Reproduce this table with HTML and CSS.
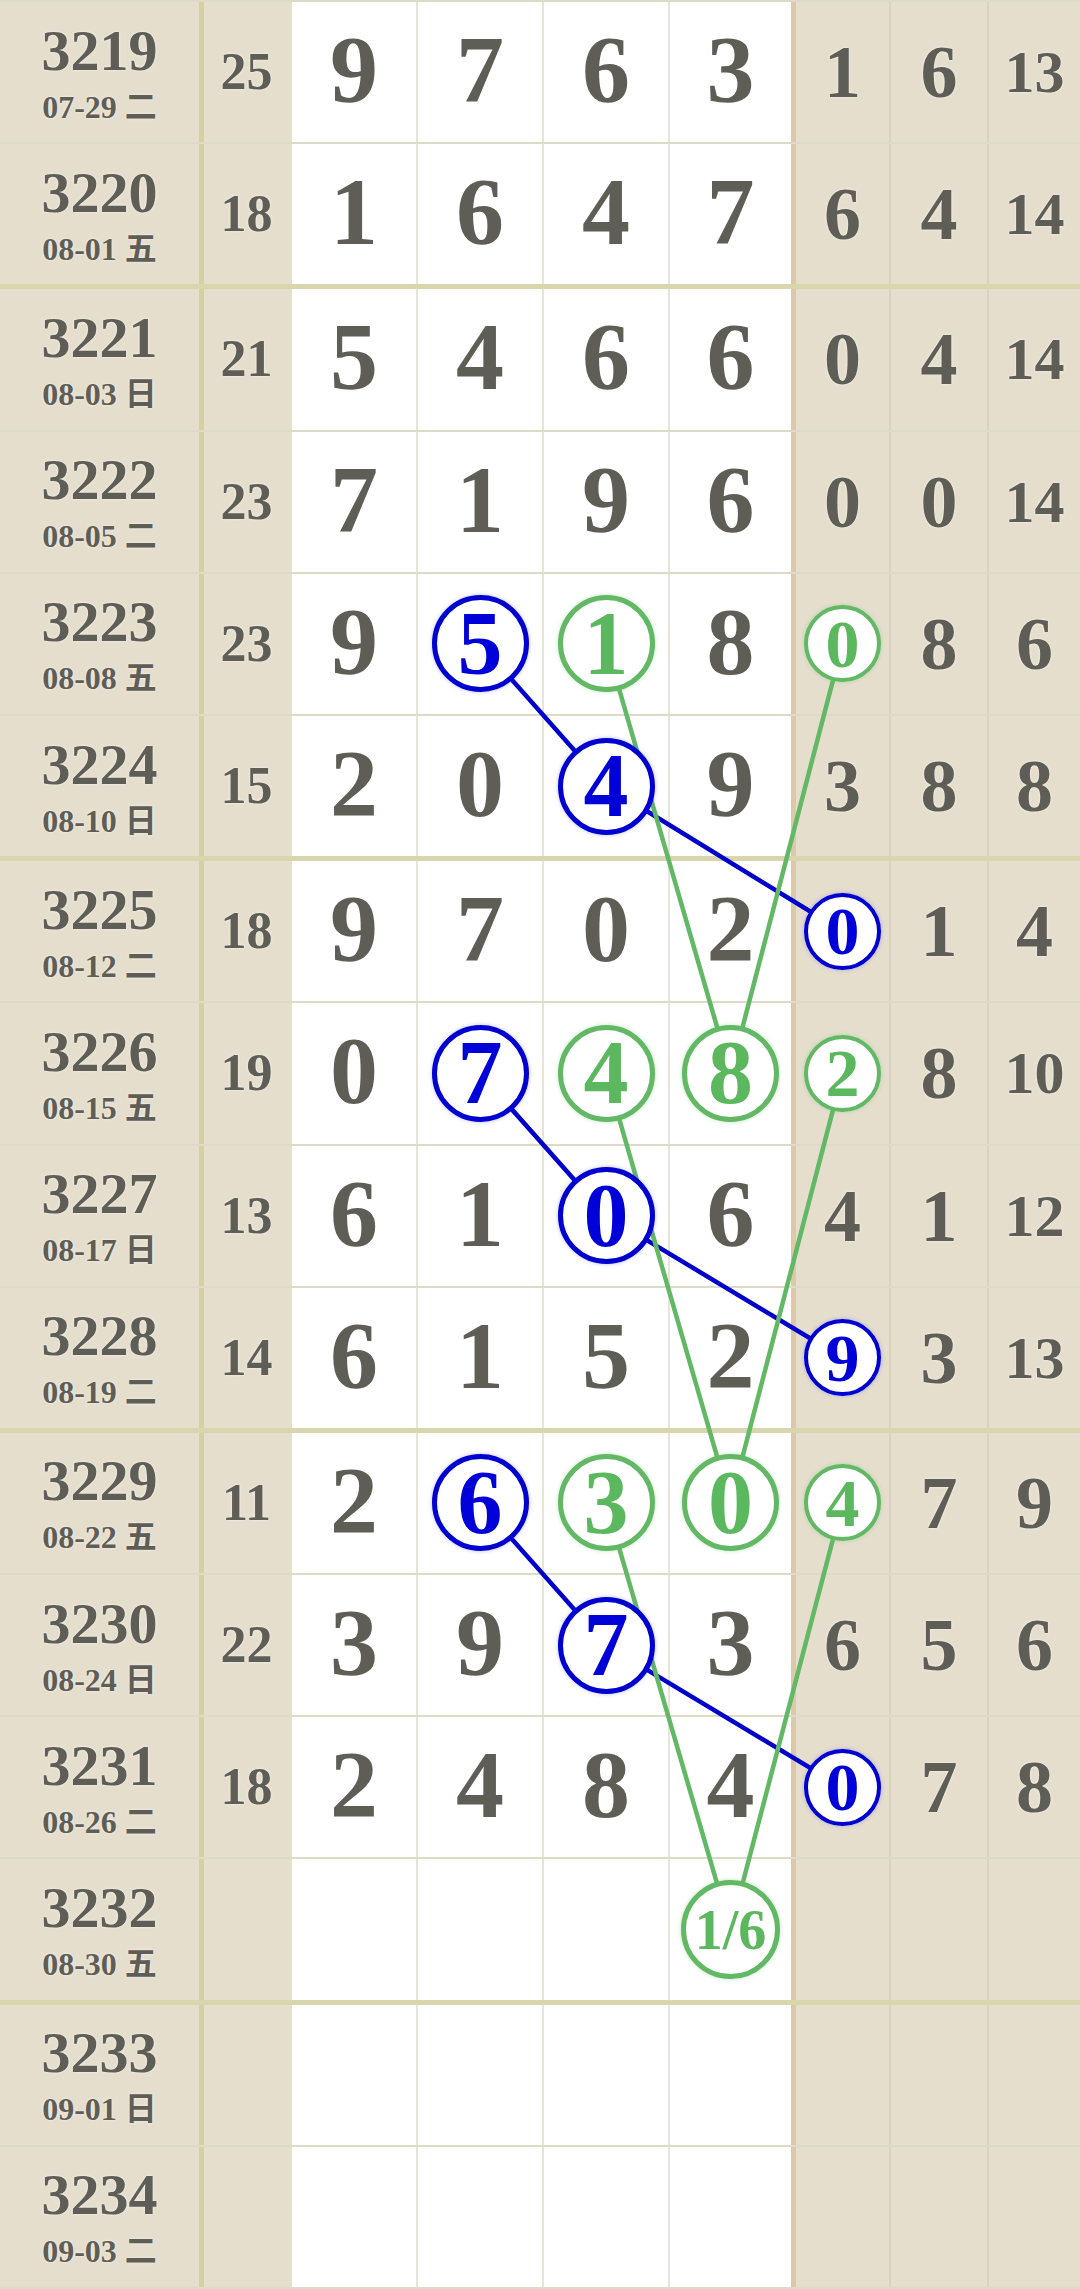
FILE: index.html
```html
<!DOCTYPE html>
<html lang="zh">
<head>
  <meta charset="UTF-8" />
  <meta name="viewport" content="width=device-width, initial-scale=1.0" />
  <title>走势图</title>
  <link rel="stylesheet" href="styles.css">
</head>
<body>
  <div class="board" id="board">
    <svg class="links" id="links" width="1080" height="2289" xmlns="http://www.w3.org/2000/svg"></svg>
  </div>
  <script>
    // b = blue ball, g = green ball
    const rows = [
      ['3219', '07-29', '二', '25', ['9', '7', '6', '3'], ['1', '6', '13']],
      ['3220', '08-01', '五', '18', ['1', '6', '4', '7'], ['6', '4', '14']],
      ['3221', '08-03', '日', '21', ['5', '4', '6', '6'], ['0', '4', '14']],
      ['3222', '08-05', '二', '23', ['7', '1', '9', '6'], ['0', '0', '14']],
      ['3223', '08-08', '五', '23', ['9', 'b5', 'g1', '8'], ['g0', '8', '6']],
      ['3224', '08-10', '日', '15', ['2', '0', 'b4', '9'], ['3', '8', '8']],
      ['3225', '08-12', '二', '18', ['9', '7', '0', '2'], ['b0', '1', '4']],
      ['3226', '08-15', '五', '19', ['0', 'b7', 'g4', 'g8'], ['g2', '8', '10']],
      ['3227', '08-17', '日', '13', ['6', '1', 'b0', '6'], ['4', '1', '12']],
      ['3228', '08-19', '二', '14', ['6', '1', '5', '2'], ['b9', '3', '13']],
      ['3229', '08-22', '五', '11', ['2', 'b6', 'g3', 'g0'], ['g4', '7', '9']],
      ['3230', '08-24', '日', '22', ['3', '9', 'b7', '3'], ['6', '5', '6']],
      ['3231', '08-26', '二', '18', ['2', '4', '8', '4'], ['b0', '7', '8']],
      ['3232', '08-30', '五', '', ['', '', '', 'g1/6'], ['', '', '']],
      ['3233', '09-01', '日', '', ['', '', '', ''], ['', '', '']],
      ['3234', '09-03', '二', '', ['', '', '', ''], ['', '', '']]
    ];

    const groupEnds = [1, 5, 9, 13];

    // [row, col] pairs, col 0-3 digits, 4-6 right columns
    const links = [
      ['blue', [4, 1], [5, 2]], ['blue', [5, 2], [6, 4]],
      ['green', [4, 2], [7, 3]], ['green', [4, 4], [7, 3]],
      ['blue', [7, 1], [8, 2]], ['blue', [8, 2], [9, 4]],
      ['green', [7, 2], [10, 3]], ['green', [7, 4], [10, 3]],
      ['blue', [10, 1], [11, 2]], ['blue', [11, 2], [12, 4]],
      ['green', [10, 2], [13, 3]], ['green', [10, 4], [13, 3]]
    ];

    function cellHtml(value, r, c) {
      if (value[0] === 'b' || value[0] === 'g') {
        const color = value[0] === 'b' ? 'blue' : 'green';
        const text = value.slice(1);
        const wide = text.length > 1 ? ' wide' : '';
        return `<span class="ball ${color}${wide}" id="r${r}c${c}">${text}</span>`;
      }
      return value;
    }

    function render() {
      const board = document.getElementById('board');
      rows.forEach((row, r) => {
        const el = document.createElement('div');
        el.className = 'row';
        if (r === 0) el.className += ' first';
        if (groupEnds.includes(r)) el.className += ' group-end';
        let html = `<div class="cell issue"><span class="no">${row[0]}</span>
          <span class="date">${row[1]} ${row[2]}</span></div>
          <div class="cell sum">${row[3]}</div>`;
        row[4].forEach((d, i) => {
          html += `<div class="cell digit${i === 3 ? ' last' : ''}">${cellHtml(d, r, i)}</div>`;
        });
        row[5].forEach((d, i) => {
          const small = d.length > 1 && d[0] !== 'b' && d[0] !== 'g' ? ' small' : '';
          html += `<div class="cell extra${small}">${cellHtml(d, r, i + 4)}</div>`;
        });
        el.innerHTML = html;
        board.appendChild(el);
      });
    }

    function center(id, base) {
      const b = document.getElementById(id).getBoundingClientRect();
      return [b.left + b.width / 2 - base.left, b.top + b.height / 2 - base.top];
    }

    function drawLinks() {
      const svg = document.getElementById('links');
      const base = document.getElementById('board').getBoundingClientRect();
      let out = '';
      links.forEach(([color, a, b]) => {
        const p = center(`r${a[0]}c${a[1]}`, base);
        const q = center(`r${b[0]}c${b[1]}`, base);
        out += `<line class="${color}" x1="${p[0]}" y1="${p[1]}" x2="${q[0]}" y2="${q[1]}" />`;
      });
      svg.innerHTML = out;
    }

    render();
    drawLinks();
  </script>
</body>
</html>
```

FILE: styles.css
```css
body {
  margin: 0;
  background: #fff;
  font-family: "Liberation Serif", "Noto Sans CJK SC", serif;
  color: #5f5e56;
}
.board {
  position: relative;
  width: 1080px;
  height: 2289px;
  display: flex;
  flex-direction: column;
  overflow: hidden;
}
.links {
  position: absolute;
  left: 0;
  top: 0;
  z-index: 1;
}
.links line {
  stroke-width: 4.5;
  stroke-linecap: round;
}
.links line.blue {
  stroke: #0000cc;
}
.links line.green {
  stroke: #62b865;
}
.row {
  flex: 1 1 0;
  min-height: 0;
  display: grid;
  grid-template-columns: 204px 88px repeat(4, 126px) 95px 98px 91px;
  box-sizing: border-box;
  border-bottom: 2px solid #dedac8;
}
.row.first {
  border-top: 2px solid #dedac8;
}
.row.group-end {
  border-bottom: 5px solid #d9d6ae;
}
.cell {
  display: flex;
  align-items: center;
  justify-content: center;
  box-sizing: border-box;
  font-weight: bold;
  line-height: 1;
  background: #fff;
  border-right: 2px solid #e7e4d8;
}
.issue {
  flex-direction: column;
  gap: 11px;
  background: #e5decd;
  border-right: 5px solid #d5d19f;
  text-shadow: 0 0 3px rgba(255, 255, 255, 0.7);
}
.issue .no {
  font-size: 58px;
}
.issue .date {
  font-size: 32px;
}
.sum {
  background: #e5decd;
  border-right: 3px solid #e0e4c6;
  font-size: 52px;
  text-shadow: 0 0 3px rgba(255, 255, 255, 0.7);
}
.digit {
  font-size: 96px;
  padding-bottom: 4px;
}
.digit.last {
  border-right: 5px solid #ddc8a8;
}
.extra {
  background: #e5decd;
  border-right: 2px solid #dad2be;
  font-size: 74px;
  text-shadow: 0 0 3px rgba(255, 255, 255, 0.7);
}
.extra.small {
  font-size: 60px;
}
.extra:last-child {
  border-right: none;
}
.ball {
  position: relative;
  z-index: 2;
  width: 97px;
  height: 97px;
  box-sizing: border-box;
  border: 5px solid;
  border-radius: 50%;
  background: #fff;
  display: flex;
  align-items: center;
  justify-content: center;
  font-size: 90px;
  line-height: 1;
}
.digit .ball {
  margin-top: 4px;
}
.extra .ball {
  width: 77px;
  height: 77px;
  border-width: 4.5px;
  font-size: 68px;
}
.ball.wide {
  width: 99px;
  height: 99px;
  font-size: 56px;
}
.ball.blue {
  color: #0000d8;
  border-color: #0000d0;
  box-shadow: 0 0 4px rgba(70, 70, 255, 0.35);
}
.ball.green {
  color: #5cb85e;
  border-color: #62b865;
  box-shadow: 0 0 4px rgba(120, 200, 120, 0.45);
}
```
